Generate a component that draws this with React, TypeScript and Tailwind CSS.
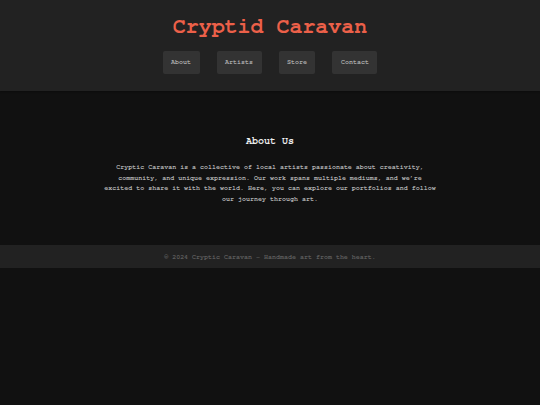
export default function App() {
  const font = { fontFamily: '"FreeMono", "Courier New", monospace' };
  return (
    <div className="min-h-[405px] bg-[#111111]" style={font}>
      <header className="bg-[#222222] h-[91px] flex flex-col items-center pt-[14px] shadow-[0_1px_2px_rgba(0,0,0,0.3)]">
        <h1 className="text-[21.6px] leading-[26px] font-bold text-[#ec6049]">Cryptid Caravan</h1>
        <nav className="flex gap-[17px] mt-[11px]">
          {["About", "Artists", "Store", "Contact"].map((t) => (
            <a key={t} className="bg-[#333333] text-[#a8a8a8] font-bold text-[6.67px] leading-[9px] px-[8.5px] py-[6.8px] rounded-[2px]">
              {t}
            </a>
          ))}
        </nav>
      </header>
      <main className="h-[154px] flex flex-col items-center pt-[44px]">
        <h2 className="text-[10px] leading-[12px] font-bold text-[#eeeeee]">About Us</h2>
        <p className="w-[334px] text-center font-bold text-[6.67px] leading-[10.67px] text-[#b0b0b0] mt-[15px]">
          Cryptic Caravan is a collective of local artists passionate about creativity, community, and unique expression. Our work spans multiple mediums, and we’re excited to share it with the world. Here, you can explore our portfolios and follow our journey through art.
        </p>
      </main>
      <footer className="bg-[#222222] h-[23px] flex items-center justify-center font-bold text-[6.67px] text-[#5c5c5c]">
        © 2024 Cryptic Caravan - Handmade art from the heart.
      </footer>
    </div>
  );
}
